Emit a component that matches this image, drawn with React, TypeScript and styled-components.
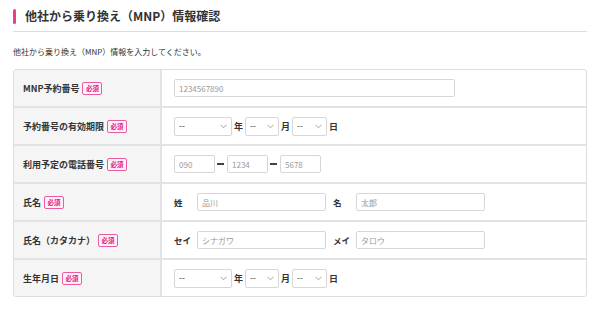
import React from "react";
import styled, { createGlobalStyle } from "styled-components";

const Global = createGlobalStyle`
  html, body { margin: 0; padding: 0; background: #fff; }
  body { font-family: "Noto Sans CJK JP", "Noto Sans", sans-serif; color: #333; }
  * { box-sizing: border-box; }
`;

const Page = styled.div`
  padding: 0 13px;
`;

const Header = styled.div`
  display: flex;
  align-items: center;
  height: 32px;
  border-bottom: 1px solid #dedede;
  gap: 9px;
`;

const Bar = styled.span`
  width: 3px;
  height: 15px;
  border-radius: 2px;
  background: #ea3f8f;
  margin-top: 1px;
`;

const Title = styled.h1`
  margin: 0;
  font-size: 12px;
  font-weight: 700;
  color: #333;
  line-height: 1;
  margin-top: 1px;
`;

const Lead = styled.p`
  margin: 14px 0 11px;
  font-size: 8px;
  line-height: 12px;
  color: #333;
`;

const Table = styled.div`
  border: 1px solid #dddddd;
  border-radius: 3px;
  overflow: hidden;
  display: grid;
  grid-template-columns: 148px 1fr;
`;

const LabelCell = styled.div<{ $first?: boolean }>`
  height: ${(p) => (p.$first ? 36 : 38)}px;
  background: #f5f5f5;
  border-right: 2px solid #e3e3e3;
  border-top: ${(p) => (p.$first ? "none" : "2px solid #e3e3e3")};
  display: flex;
  align-items: center;
  gap: 3px;
  padding-left: 9px;
  font-size: 9px;
  font-weight: 700;
  color: #333;
`;

const ValueCell = styled.div<{ $first?: boolean }>`
  height: ${(p) => (p.$first ? 36 : 38)}px;
  border-top: ${(p) => (p.$first ? "none" : "2px solid #e3e3e3")};
  display: flex;
  align-items: center;
  padding-left: 12px;
`;

const Badge = styled.span`
  display: inline-flex;
  align-items: center;
  justify-content: center;
  width: 20px;
  height: 13px;
  border: 1px solid #ec5aa3;
  border-radius: 2px;
  background: #fff2f8;
  color: #e2157f;
  font-size: 6.5px;
  font-weight: 700;
  line-height: 1;
`;

const TextInput = styled.input<{ $w: number }>`
  width: ${(p) => p.$w}px;
  height: 18px;
  border: 1px solid #d6d6d6;
  border-radius: 2px;
  padding: 0 4px;
  font-family: inherit;
  font-size: 8px;
  color: #999;
  background: #fff;
  outline: none;
  &::placeholder { color: #999; }
`;

const SelectWrap = styled.span<{ $w: number }>`
  position: relative;
  display: inline-block;
  width: ${(p) => p.$w}px;
  height: 19px;
`;

const Select = styled.select`
  appearance: none;
  -webkit-appearance: none;
  display: block;
  width: 100%;
  height: 100%;
  border: 1px solid #d6d6d6;
  border-radius: 2px;
  background: #fff;
  padding: 0 4px;
  font-family: "Liberation Sans", sans-serif;
  font-size: 9px;
  line-height: 17px;
  color: #555;
  outline: none;
`;

const Chevron = styled.svg`
  position: absolute;
  right: 5px;
  top: 7px;
  width: 7px;
  height: 5px;
  pointer-events: none;
`;

const Unit = styled.span`
  font-size: 9px;
  font-weight: 700;
  color: #333;
  margin: 0 2px;
`;

const Dash = styled.span`
  display: inline-block;
  width: 7px;
  height: 2px;
  background: #444;
  margin: 0 3px 0 2px;
`;

const NameLabel = styled.span<{ $gapLeft?: number }>`
  width: 23px;
  margin-left: ${(p) => p.$gapLeft ?? 0}px;
  font-size: 8.5px;
  font-weight: 700;
  color: #333;
`;

const DropDown: React.FC<{ w: number }> = ({ w }) => (
  <SelectWrap $w={w}>
    <Select defaultValue="--">
      <option value="--">--</option>
    </Select>
    <Chevron viewBox="0 0 7 5" fill="none">
      <path d="M0.5 0.8 L3.5 3.8 L6.5 0.8" stroke="#999" strokeWidth="0.9" />
    </Chevron>
  </SelectWrap>
);

const DateField: React.FC = () => (
  <>
    <DropDown w={58} />
    <Unit>年</Unit>
    <DropDown w={34} />
    <Unit>月</Unit>
    <DropDown w={35} />
    <Unit>日</Unit>
  </>
);

const Required = () => <Badge>必須</Badge>;

export default function App() {
  return (
    <>
      <Global />
      <Page>
        <Header>
          <Bar />
          <Title>他社から乗り換え（MNP）情報確認</Title>
        </Header>
        <Lead>他社から乗り換え（MNP）情報を入力してください。</Lead>
        <Table>
          <LabelCell $first>
            MNP予約番号 <Required />
          </LabelCell>
          <ValueCell $first>
            <TextInput $w={281} placeholder="1234567890" />
          </ValueCell>

          <LabelCell>
            予約番号の有効期限 <Required />
          </LabelCell>
          <ValueCell>
            <DateField />
          </ValueCell>

          <LabelCell>
            利用予定の電話番号 <Required />
          </LabelCell>
          <ValueCell>
            <TextInput $w={41} placeholder="090" />
            <Dash />
            <TextInput $w={41} placeholder="1234" />
            <Dash />
            <TextInput $w={41} placeholder="5678" />
          </ValueCell>

          <LabelCell>
            氏名 <Required />
          </LabelCell>
          <ValueCell>
            <NameLabel>姓</NameLabel>
            <TextInput $w={129} placeholder="品川" />
            <NameLabel $gapLeft={7}>名</NameLabel>
            <TextInput $w={129} placeholder="太郎" />
          </ValueCell>

          <LabelCell>
            氏名（カタカナ） <Required />
          </LabelCell>
          <ValueCell>
            <NameLabel>セイ</NameLabel>
            <TextInput $w={129} placeholder="シナガワ" />
            <NameLabel $gapLeft={7}>メイ</NameLabel>
            <TextInput $w={129} placeholder="タロウ" />
          </ValueCell>

          <LabelCell>
            生年月日 <Required />
          </LabelCell>
          <ValueCell>
            <DateField />
          </ValueCell>
        </Table>
      </Page>
    </>
  );
}
